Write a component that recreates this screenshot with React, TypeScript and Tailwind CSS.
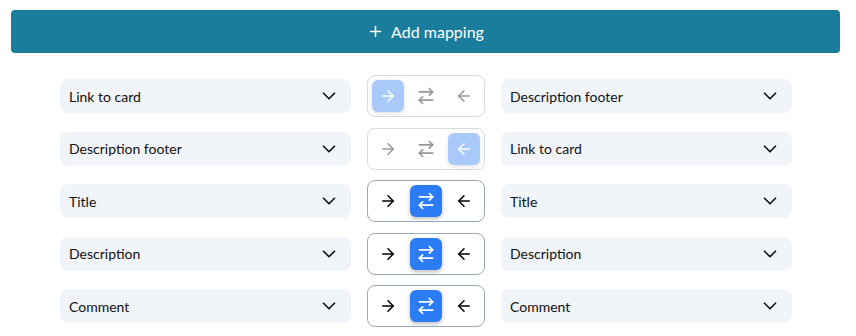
import { ArrowLeft, ArrowRight, ArrowRightLeft, ChevronDown, Plus } from 'lucide-react';

type Direction = 'right' | 'both' | 'left';

const mappings: { left: string; right: string; dir: Direction; muted?: boolean }[] = [
  { left: 'Link to card', right: 'Description footer', dir: 'right', muted: true },
  { left: 'Description footer', right: 'Link to card', dir: 'left', muted: true },
  { left: 'Title', right: 'Title', dir: 'both' },
  { left: 'Description', right: 'Description', dir: 'both' },
  { left: 'Comment', right: 'Comment', dir: 'both' },
];

function FieldSelect({ value }: { value: string }) {
  return (
    <div className="flex h-[34px] w-[291px] items-center justify-between rounded-lg bg-[#f1f4f8] pl-[9px] pr-[11px] text-[14px] text-[#111]">
      <span>{value}</span>
      <ChevronDown size={22} strokeWidth={1.8} className="text-[#111]" />
    </div>
  );
}

function DirectionToggle({ dir, muted }: { dir: Direction; muted?: boolean }) {
  const items: { key: Direction; Icon: React.ElementType }[] = [
    { key: 'right', Icon: ArrowRight },
    { key: 'both', Icon: ArrowRightLeft },
    { key: 'left', Icon: ArrowLeft },
  ];
  return (
    <div className={`flex h-[42px] w-[118px] items-center gap-[6px] rounded-lg border border-[#9aa8b8] bg-white p-1 ${muted ? 'opacity-40' : ''}`}>
      {items.map(({ key, Icon }) => {
        const active = key === dir;
        return (
          <span
            key={key}
            className={`flex h-[32px] w-[32px] items-center justify-center rounded-md ${active ? 'bg-[#2b7cf5] text-white shadow-[0_2px_4px_rgba(0,0,0,0.25)]' : 'text-black'}`}
          >
            <Icon size={key === 'both' ? 20 : 18} strokeWidth={2} />
          </span>
        );
      })}
    </div>
  );
}

export default function App() {
  return (
    <div className="h-[336px] w-[856px] bg-white pt-[10px]" style={{ fontFamily: 'Lato, "Liberation Sans", sans-serif' }}>
      <button className="ml-[11px] flex h-[43px] w-[829px] items-center justify-center gap-[7px] rounded-[4px] bg-[#1a7d9b] text-[16px] text-white">
        <Plus size={17} strokeWidth={2.2} />
        <span>Add mapping</span>
      </button>
      <div className="mt-[22px] flex flex-col items-center gap-[10.5px] pr-[4px]">
        {mappings.map((m, i) => (
          <div key={i} className="flex items-center gap-4">
            <FieldSelect value={m.left} />
            <DirectionToggle dir={m.dir} muted={m.muted} />
            <FieldSelect value={m.right} />
          </div>
        ))}
      </div>
    </div>
  );
}
